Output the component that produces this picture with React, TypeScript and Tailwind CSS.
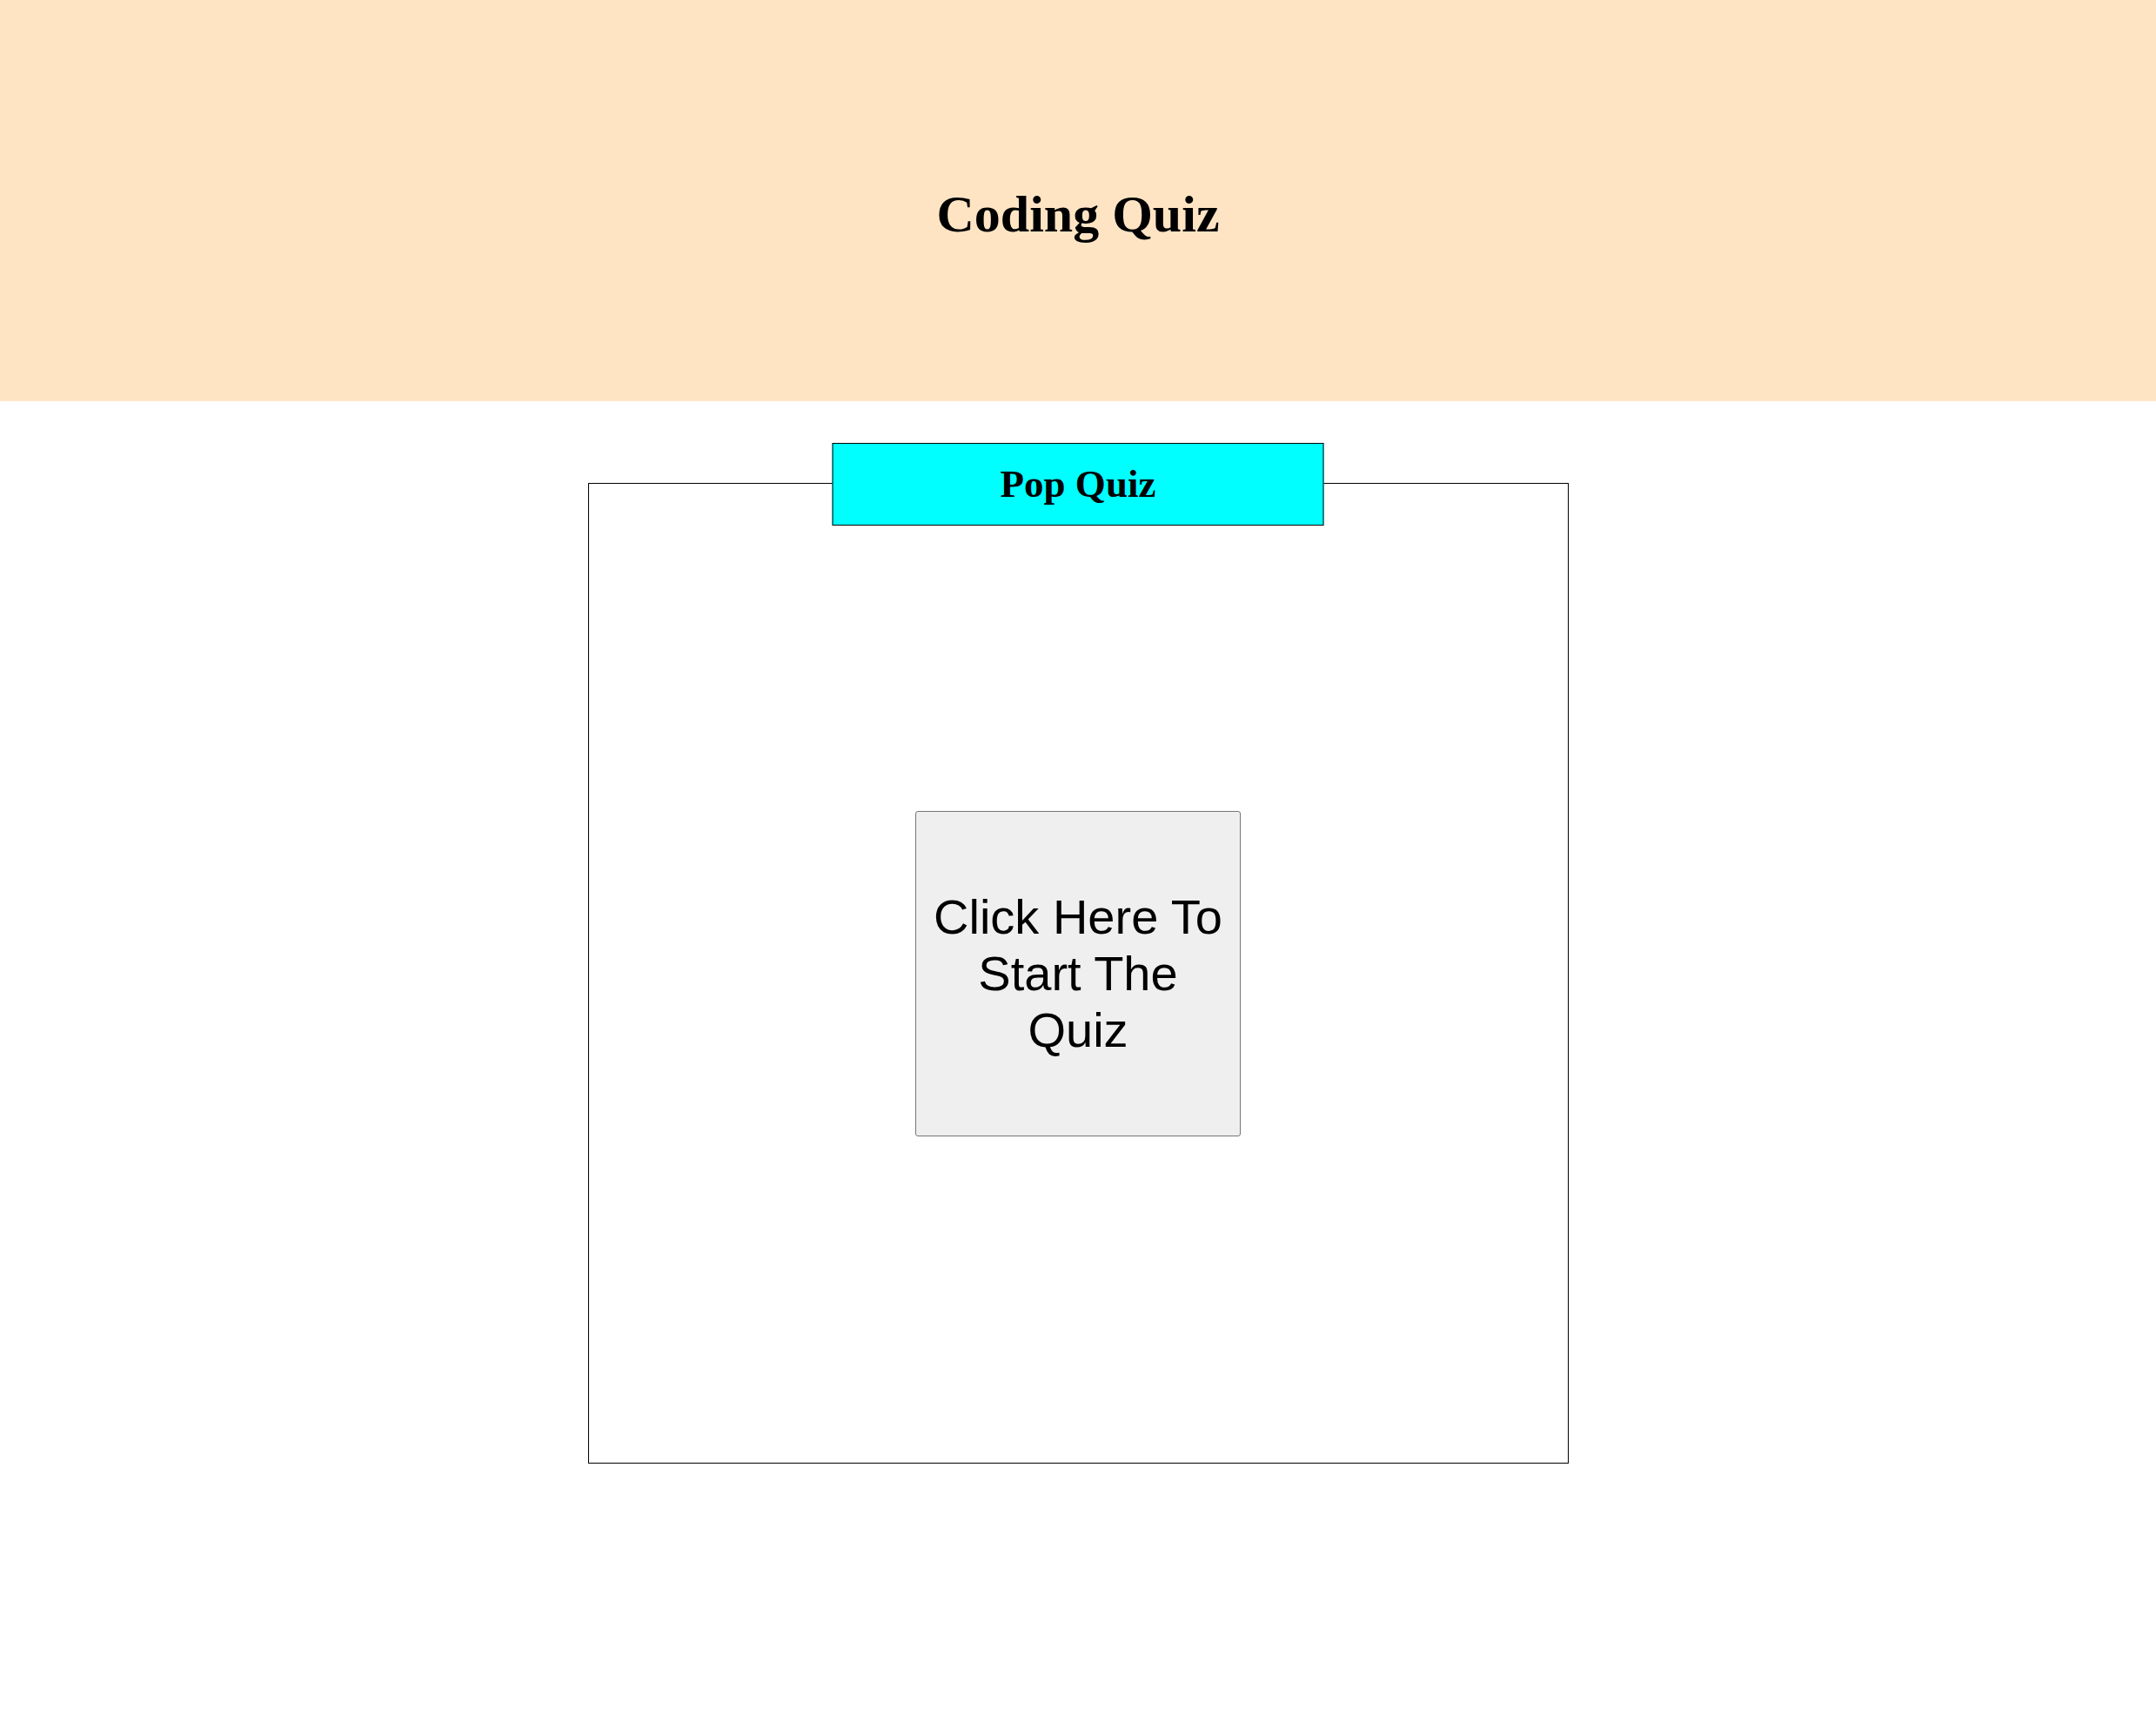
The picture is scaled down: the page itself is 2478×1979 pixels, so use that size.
const App = () => {
  return (
    <div className="min-h-screen bg-white text-black">
      {/* header */}
      <header className="h-[461px] bg-[#ffe4c4] pt-[213px]">
        <h1 className="text-center text-[60px] leading-[66px] font-bold font-['Liberation_Serif',serif]">
          Coding Quiz
        </h1>
      </header>

      {/* quiz box */}
      <div className="pt-[94px]">
        <div className="relative mx-auto w-[1127px] h-[1127px] border border-black flex items-center justify-center">
          <div className="absolute left-1/2 -translate-x-1/2 top-[-47px] w-[565px] h-[95px] bg-[#00ffff] border border-black flex items-center justify-center">
            <span className="text-[45px] font-bold font-['Liberation_Serif',serif]">
              Pop Quiz
            </span>
          </div>
          <button className="w-[374px] h-[374px] bg-[#efefef] border border-[#767676] rounded-[3px] px-[20px] text-[56px] leading-[65px] text-black font-['Liberation_Sans',Arial,sans-serif]">
            Click Here To Start The Quiz
          </button>
        </div>
      </div>
    </div>
  );
};

export default App;
